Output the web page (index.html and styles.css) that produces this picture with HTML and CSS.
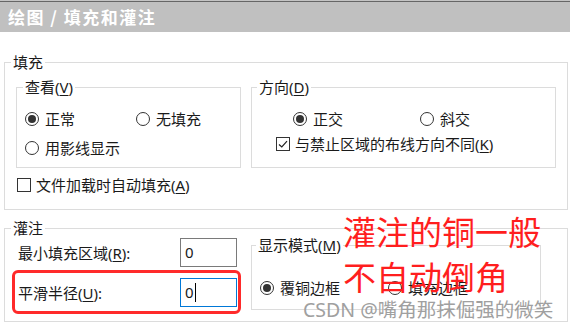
FILE: index.html
```
<!DOCTYPE html>
<html lang="zh-CN">
<head>
  <meta charset="UTF-8">
  <meta name="viewport" content="width=device-width, initial-scale=1.0">
  <title>绘图 / 填充和灌注</title>
  <link rel="stylesheet" href="styles.css">
</head>
<body>
  <div class="titlebar">绘图 / 填充和灌注</div>

  <!-- 填充 -->
  <fieldset class="group fill">
    <legend>填充</legend>
    <div class="fill-body">
      <div class="fill-row">
        <fieldset class="group view">
          <legend>查看(<u>V</u>)</legend>
          <div class="options view-options">
            <label class="opt"><span class="radio on"></span><span>正常</span></label>
            <label class="opt"><span class="radio"></span><span>无填充</span></label>
            <label class="opt"><span class="radio"></span><span>用影线显示</span></label>
          </div>
        </fieldset>
        <fieldset class="group direction">
          <legend>方向(<u>D</u>)</legend>
          <div class="options dir-options">
            <div class="dir-radios">
              <label class="opt"><span class="radio on"></span><span>正交</span></label>
              <label class="opt"><span class="radio"></span><span>斜交</span></label>
            </div>
            <label class="opt check-opt">
              <span class="check on"><svg viewBox="0 0 14 14" width="14" height="14"><polyline points="3,7.5 5.8,10 11,4.2" fill="none" stroke="#222" stroke-width="1.2"/></svg></span>
              <span>与禁止区域的布线方向不同(<u>K</u>)</span>
            </label>
          </div>
        </fieldset>
      </div>
      <label class="opt check-opt autofill"><span class="check"></span><span>文件加载时自动填充(<u>A</u>)</span></label>
    </div>
  </fieldset>

  <!-- 灌注 -->
  <fieldset class="group pour">
    <legend>灌注</legend>
    <div class="pour-body">
      <div class="pour-fields">
        <div class="field-row">
          <span class="field-label">最小填充区域(<u>R</u>):</span>
          <div class="field">0</div>
        </div>
        <div class="field-row">
          <span class="field-label">平滑半径(<u>U</u>):</span>
          <div class="field focused">0<span class="caret"></span></div>
        </div>
      </div>
      <fieldset class="group mode">
        <legend>显示模式(<u>M</u>)</legend>
        <div class="options mode-options">
          <label class="opt"><span class="radio on"></span><span>覆铜边框</span></label>
          <label class="opt"><span class="radio"></span><span>填充边框</span></label>
        </div>
      </fieldset>
    </div>
  </fieldset>

  <!-- annotations -->
  <div class="highlight"></div>
  <div class="note">灌注的铜一般<br>不自动倒角</div>
  <div class="watermark">CSDN @嘴角那抹倔强的微笑</div>
</body>
</html>
```

FILE: styles.css
```
* {
  margin: 0;
  padding: 0;
  box-sizing: border-box;
}

body {
  width: 570px;
  height: 331px;
  background: #ffffff;
  font-family: "Noto Sans", "Noto Sans CJK SC", sans-serif;
  font-size: 15px;
  color: #1a1a1a;
  position: relative;
  overflow: hidden;
}

u {
  text-underline-offset: 2px;
}

.titlebar {
  height: 32px;
  background: linear-gradient(#c4c4c4 0 1px, #666666 1px 2px, #c0c0c0 2px);
  color: #ffffff;
  font-family: "Noto Sans CJK SC", sans-serif;
  font-size: 17px;
  font-weight: bold;
  line-height: 34px;
  padding-left: 8px;
  letter-spacing: 1.5px;
}

/* group boxes */
.group {
  border: 1px solid #dcdcdc;
  min-width: 0;
}

.group legend {
  margin-left: 6px;
  padding: 0 2px;
  line-height: 18px;
}

.fill {
  margin: 21px 2px 0 4px;
  height: 157px;
}

.fill-body {
  padding: 7px 0 0 11px;
}

.fill-row {
  display: flex;
  gap: 10px;
}

.view {
  width: 225px;
  height: 90px;
}

.direction {
  width: 305px;
  height: 90px;
}

.direction legend {
  margin-left: 5px;
}

.options {
  line-height: 20px;
}

.view-options {
  display: grid;
  grid-template-columns: 111px auto;
  row-gap: 9px;
  padding: 13px 0 0 8px;
}

.dir-options {
  display: flex;
  flex-direction: column;
  gap: 5px;
  padding: 13px 0 0 24px;
}

.dir-radios {
  display: grid;
  grid-template-columns: 127px auto;
  padding-left: 17px;
}

.opt {
  display: flex;
  align-items: center;
  gap: 6px;
  white-space: nowrap;
}

.radio {
  width: 14px;
  height: 14px;
  border: 1px solid #333333;
  border-radius: 50%;
  display: flex;
  align-items: center;
  justify-content: center;
  flex: none;
}

.radio.on::after {
  content: "";
  width: 8px;
  height: 8px;
  border-radius: 50%;
  background: #333333;
}

.check-opt {
  gap: 5px;
}

.check {
  width: 14px;
  height: 14px;
  border: 1px solid #333333;
  flex: none;
  position: relative;
}

.check svg {
  position: absolute;
  left: -1px;
  top: -1px;
}

.autofill {
  margin: 7px 0 0 1px;
  line-height: 20px;
}

/* 灌注 */
.pour {
  margin: 9px 2px 0 4px;
  height: 103px;
}

.pour-body {
  display: flex;
  padding-left: 11px;
}

.pour-fields {
  width: 224px;
  padding: 1px 0 0 2px;
  display: flex;
  flex-direction: column;
  gap: 11px;
}

.field-row {
  display: flex;
  align-items: center;
}

.field-label {
  width: 162px;
}

.field {
  width: 57px;
  height: 29px;
  border: 1px solid #7a7a7a;
  padding-left: 4px;
  line-height: 27px;
  display: flex;
  align-items: center;
}

.field.focused {
  border-color: #0078d7;
}

.caret {
  width: 1px;
  height: 19px;
  background: #000000;
  margin-left: 1px;
}

.mode {
  width: 290px;
  height: 74px;
  margin: -1px 0 0 11px;
}

.mode legend {
  margin-left: 4px;
}

.mode-options {
  display: grid;
  grid-template-columns: 128px auto;
  padding: 24px 0 0 8px;
}

/* annotations over the dialog */
.highlight {
  position: absolute;
  left: 12px;
  top: 270px;
  width: 229px;
  height: 44px;
  border: 3px solid #ff2a2a;
  border-radius: 6px;
}

.note {
  position: absolute;
  left: 343px;
  top: 209px;
  font-family: "Noto Sans CJK SC", sans-serif;
  font-size: 33px;
  line-height: 45px;
  color: #ff1e1e;
}

.watermark {
  position: absolute;
  left: 303px;
  top: 300px;
  font-size: 19.5px;
  line-height: 20px;
  color: #a0a0a0;
  white-space: nowrap;
}
```
